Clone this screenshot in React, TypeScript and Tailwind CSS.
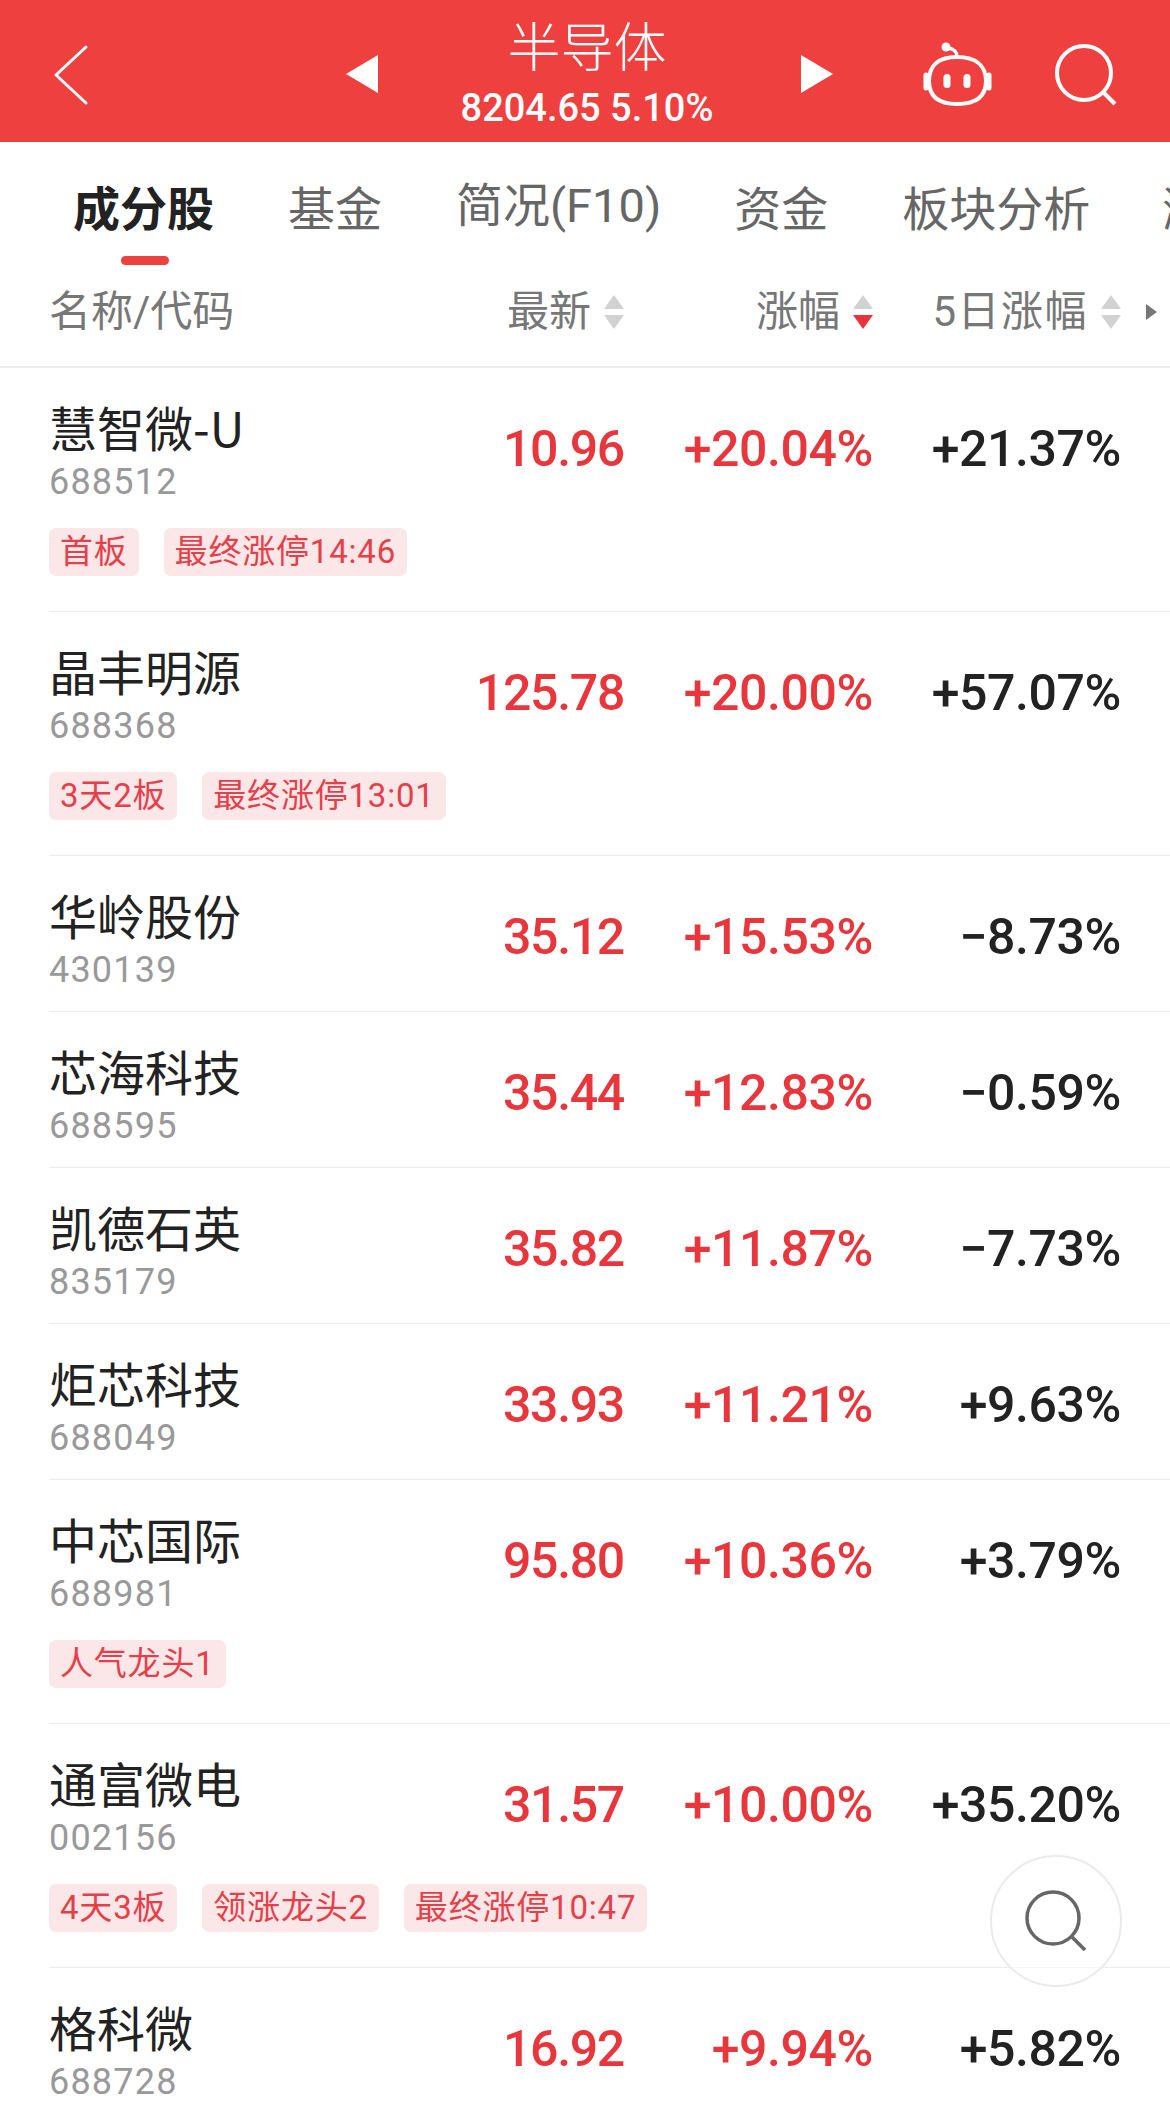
const NUM = "font-['Roboto','Noto_Sans_CJK_SC',sans-serif]";

type Row = { name: string; code: string; price: string; pct: string; five: string; tags?: string[] };

const rows: Row[] = [
  { name: "慧智微-U", code: "688512", price: "10.96", pct: "+20.04%", five: "+21.37%", tags: ["首板", "最终涨停14:46"] },
  { name: "晶丰明源", code: "688368", price: "125.78", pct: "+20.00%", five: "+57.07%", tags: ["3天2板", "最终涨停13:01"] },
  { name: "华岭股份", code: "430139", price: "35.12", pct: "+15.53%", five: "−8.73%" },
  { name: "芯海科技", code: "688595", price: "35.44", pct: "+12.83%", five: "−0.59%" },
  { name: "凯德石英", code: "835179", price: "35.82", pct: "+11.87%", five: "−7.73%" },
  { name: "炬芯科技", code: "688049", price: "33.93", pct: "+11.21%", five: "+9.63%" },
  { name: "中芯国际", code: "688981", price: "95.80", pct: "+10.36%", five: "+3.79%", tags: ["人气龙头1"] },
  { name: "通富微电", code: "002156", price: "31.57", pct: "+10.00%", five: "+35.20%", tags: ["4天3板", "领涨龙头2", "最终涨停10:47"] },
  { name: "格科微", code: "688728", price: "16.92", pct: "+9.94%", five: "+5.82%" },
];

function Sort({ active }: { active?: boolean }) {
  return (
    <svg width="22" height="36" viewBox="0 0 22 36" className="shrink-0">
      <path d="M11 1 L21 15 L1 15 Z" fill="#d2d2d2" />
      <path d="M1 21 L21 21 L11 35 Z" fill={active ? "#ea3338" : "#d2d2d2"} />
    </svg>
  );
}

function HeaderCell({ label, width, active, wide }: { label: string; width: string; active?: boolean; wide?: boolean }) {
  return (
    <div className={`flex items-center justify-end gap-[12px] ${width}`}>
      <span className={wide ? "tracking-[1.5px]" : ""}>{label}</span>
      <Sort active={active} />
    </div>
  );
}

function StockRow({ row }: { row: Row }) {
  return (
    <div className="ml-[49px] border-b border-[#ececec] pr-[49px] pt-[28px] pb-[15px]">
      <div className="flex items-start">
        <div className="w-[300px] shrink-0">
          <div className="text-[48px] leading-[60px] text-[#222222]">{row.name}</div>
          <div className={`text-[36px] leading-[52px] tracking-[1.2px] text-[#999999] ${NUM}`}>{row.code}</div>
        </div>
        <div className={`mt-[25px] w-[275px] shrink-0 text-right text-[50px] leading-[56px] tracking-[-1.3px] font-medium text-[#e8363d] ${NUM}`}>{row.price}</div>
        <div className={`mt-[25px] w-[249px] shrink-0 text-right text-[50px] leading-[56px] tracking-[-0.4px] font-medium text-[#e8363d] ${NUM}`}>{row.pct}</div>
        <div className={`mt-[25px] w-[248px] shrink-0 text-right text-[50px] leading-[56px] tracking-[-0.4px] font-medium text-[#222222] ${NUM}`}>{row.five}</div>
      </div>
      {row.tags && (
        <div className="mt-[20px] mb-[20px] flex gap-[25px]">
          {row.tags.map((t) => (
            <span key={t} className={`flex h-[48px] items-center rounded-[7px] bg-[#fbe6e8] px-[11px] text-[33px] tracking-[0.8px] text-[#e5404a] ${NUM}`}>
              {t}
            </span>
          ))}
        </div>
      )}
    </div>
  );
}

export default function App() {
  return (
    <div className="relative h-[2113px] w-[1170px] overflow-hidden bg-white font-['Noto_Sans_CJK_SC',sans-serif]">
      <header className="flex h-[142px] items-center bg-[#ef4040] text-white">
        <svg width="36" height="62" viewBox="0 0 36 62" className="ml-[53px] mt-[8px]" fill="none" stroke="white" strokeWidth="3" strokeLinecap="round" strokeLinejoin="round">
          <path d="M33 3 L3 31 L33 59" />
        </svg>
        <svg width="34" height="40" viewBox="0 0 34 40" className="ml-[256px] mt-[6px]">
          <path d="M33 1 L33 39 L1 20 Z" fill="white" />
        </svg>
        <div className="flex h-full w-[416px] flex-col items-center pt-[13px]">
          <div className="text-[53px] leading-[62px] font-light">半导体</div>
          <div className={`text-[38px] leading-[66px] font-medium ${NUM}`}>8204.65 5.10%</div>
        </div>
        <svg width="34" height="40" viewBox="0 0 34 40" className="ml-[5px] mt-[6px]">
          <path d="M1 1 L1 39 L33 20 Z" fill="white" />
        </svg>
        <svg width="72" height="66" viewBox="0 0 72 66" className="ml-[87px] mt-[8px]" fill="none" stroke="white" strokeWidth="4" strokeLinecap="round">
          <path d="M36 15 C54 15 65 23 65 39 C65 55 54 62 36 62 C18 62 8 55 8 39 C8 23 18 15 36 15 Z" />
          <path d="M5 33 V46 M68 33 V46" strokeWidth="5" />
          <path d="M36 15 C36 9 33 7 27 6" strokeWidth="3.5" />
          <circle cx="25" cy="5" r="4.5" fill="white" stroke="none" />
          <rect x="22.5" y="32" width="7" height="14" rx="3.5" fill="white" stroke="none" />
          <rect x="42.5" y="32" width="7" height="14" rx="3.5" fill="white" stroke="none" />
        </svg>
        <svg width="64" height="64" viewBox="0 0 64 64" className="ml-[61px] mt-[8px]" fill="none" stroke="white" strokeWidth="4">
          <circle cx="30" cy="30" r="27" />
          <path d="M50 50 L61 61" />
        </svg>
      </header>

      <nav className="flex h-[126px] items-start overflow-hidden whitespace-nowrap pl-[73px] pt-[34px] text-[47px] leading-[60px] text-[#666666]">
        <div className="relative font-bold text-[#222222]">
          成分股
          <div className="absolute left-[48px] top-[80px] h-[9px] w-[48px] rounded-full bg-[#ef4040]" />
        </div>
        <div className="ml-[74px]">基金</div>
        <div className={`ml-[74px] ${NUM}`}>简况(F10)</div>
        <div className="ml-[73px]">资金</div>
        <div className="ml-[74px]">板块分析</div>
        <div className="ml-[72px]">涨跌</div>
      </nav>

      <div className={`flex h-[100px] items-center border-b-2 border-[#eeeeee] pb-[11px] pl-[49px] text-[42px] leading-none text-[#777777] ${NUM}`}>
        <div className="w-[351px] shrink-0">名称/代码</div>
        <HeaderCell label="最新" width="w-[225px]" />
        <HeaderCell label="涨幅" width="w-[249px]" active />
        <HeaderCell label="5日涨幅" width="w-[248px]" wide />
        <svg width="12" height="16" viewBox="0 0 12 16" className="ml-[23px] shrink-0">
          <path d="M1 0 L12 8 L1 16 Z" fill="#777777" />
        </svg>
      </div>

      <main>
        {rows.map((r) => (
          <StockRow key={r.code} row={r} />
        ))}
      </main>

      <div className="absolute left-[990px] top-[1855px] flex h-[132px] w-[132px] items-center justify-center rounded-full border-2 border-[#ebebeb] bg-white/60">
        <svg width="64" height="64" viewBox="0 0 64 64" fill="none" stroke="#666666" strokeWidth="3.5">
          <circle cx="29" cy="29" r="26" />
          <path d="M48 48 L61 61" />
        </svg>
      </div>
    </div>
  );
}
